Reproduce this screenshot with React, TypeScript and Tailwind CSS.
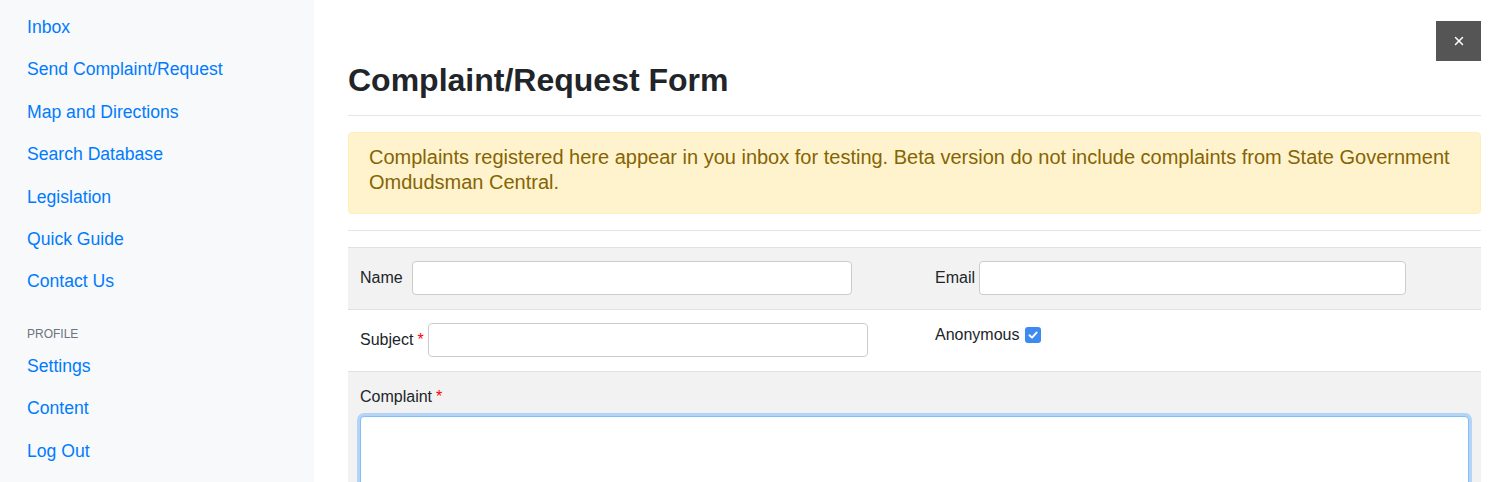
import { X } from 'lucide-react';

const mainLinks = [
  'Inbox',
  'Send Complaint/Request',
  'Map and Directions',
  'Search Database',
  'Legislation',
  'Quick Guide',
  'Contact Us',
];

const profileLinks = ['Settings', 'Content', 'Log Out'];

function NavLink({ label }: { label: string }) {
  return (
    <a
      href="#"
      className="block px-[27px] py-2 text-[17.6px] leading-[26.4px] text-[#007bff] hover:underline"
    >
      {label}
    </a>
  );
}

function Required() {
  return <span className="ml-1 text-[#ff0000]">*</span>;
}

export default function App() {
  return (
    <div
      className="flex h-[482px] w-full overflow-hidden bg-white text-[#212529]"
      style={{ fontFamily: '"Liberation Sans", Arial, sans-serif' }}
    >
      {/* Sidebar */}
      <nav className="w-[314px] shrink-0 bg-[#f8f9fa] pt-[6px]">
        {mainLinks.map((l) => (
          <NavLink key={l} label={l} />
        ))}
        <div className="mt-[22px] mb-[2px] px-[27px] text-[12px] leading-[18px] uppercase text-[#6c757d]">
          Profile
        </div>
        {profileLinks.map((l) => (
          <NavLink key={l} label={l} />
        ))}
      </nav>

      {/* Main */}
      <main className="flex-1 pl-[34px] pr-[22px] pt-[21px]">
        <div className="flex justify-end">
          <button className="flex h-[40px] w-[45px] items-center justify-center bg-[#555555] text-white">
            <X size={14} strokeWidth={2.5} />
          </button>
        </div>

        <h2 className="text-[32px] font-bold leading-[38px] text-[#212529]">
          Complaint/Request Form
        </h2>
        <hr className="mt-[16px] border-t border-[#e5e5e5]" />

        <div className="mt-[16px] rounded-[4px] border border-[#ffeeba] bg-[#fff3cd] px-[20px] pt-[12px] pb-[18px] text-[20px] leading-[25px] text-[#856404]">
          Complaints registered here appear in you inbox for testing. Beta version do not include
          complaints from State Government Omdudsman Central.
        </div>
        <hr className="mt-[16px] border-t border-[#e5e5e5]" />

        {/* Form table */}
        <div className="mt-[16px] text-[16px] leading-[24px]">
          <div className="grid h-[62px] grid-cols-[575px_1fr] border-t border-[#dee2e6] bg-[#f2f2f2]">
            <div className="flex items-start px-3 pt-[13px]">
              <label className="leading-[34px]">Name</label>
              <input className="ml-[9px] h-[34px] w-[440px] rounded-[4px] border border-[#ccc] bg-white px-3" />
            </div>
            <div className="flex items-start px-3 pt-[13px]">
              <label className="leading-[34px]">Email</label>
              <input className="ml-[4px] h-[34px] w-[427px] rounded-[4px] border border-[#ccc] bg-white px-3" />
            </div>
          </div>

          <div className="grid h-[62px] grid-cols-[575px_1fr] border-t border-[#dee2e6] bg-white">
            <div className="flex items-start px-3 pt-[13px]">
              <label className="leading-[34px]">
                Subject
                <Required />
              </label>
              <input className="ml-[4px] h-[34px] w-[440px] rounded-[4px] border border-[#ccc] bg-white px-3" />
            </div>
            <div className="flex items-start px-3 pt-[13px]">
              <label>Anonymous</label>
              <span className="ml-[5px] mt-[4px] flex h-[16px] w-[16px] items-center justify-center rounded-[3px] bg-[#3d8af0]">
                <svg width="12" height="12" viewBox="0 0 12 12" fill="none">
                  <path
                    d="M2.5 6.2 L5 8.6 L9.6 3.6"
                    stroke="white"
                    strokeWidth="2"
                    strokeLinecap="round"
                    strokeLinejoin="round"
                  />
                </svg>
              </span>
            </div>
          </div>

          <div className="border-t border-[#dee2e6] bg-[#f2f2f2] px-3 pt-[13px] pb-6">
            <label className="block">
              Complaint
              <Required />
            </label>
            <textarea className="mt-[7px] block h-[150px] w-full rounded-[4px] border border-[#80bdff] bg-white shadow-[0_0_0_3px_rgba(0,123,255,0.25)] outline-none" />
          </div>
        </div>
      </main>
    </div>
  );
}
